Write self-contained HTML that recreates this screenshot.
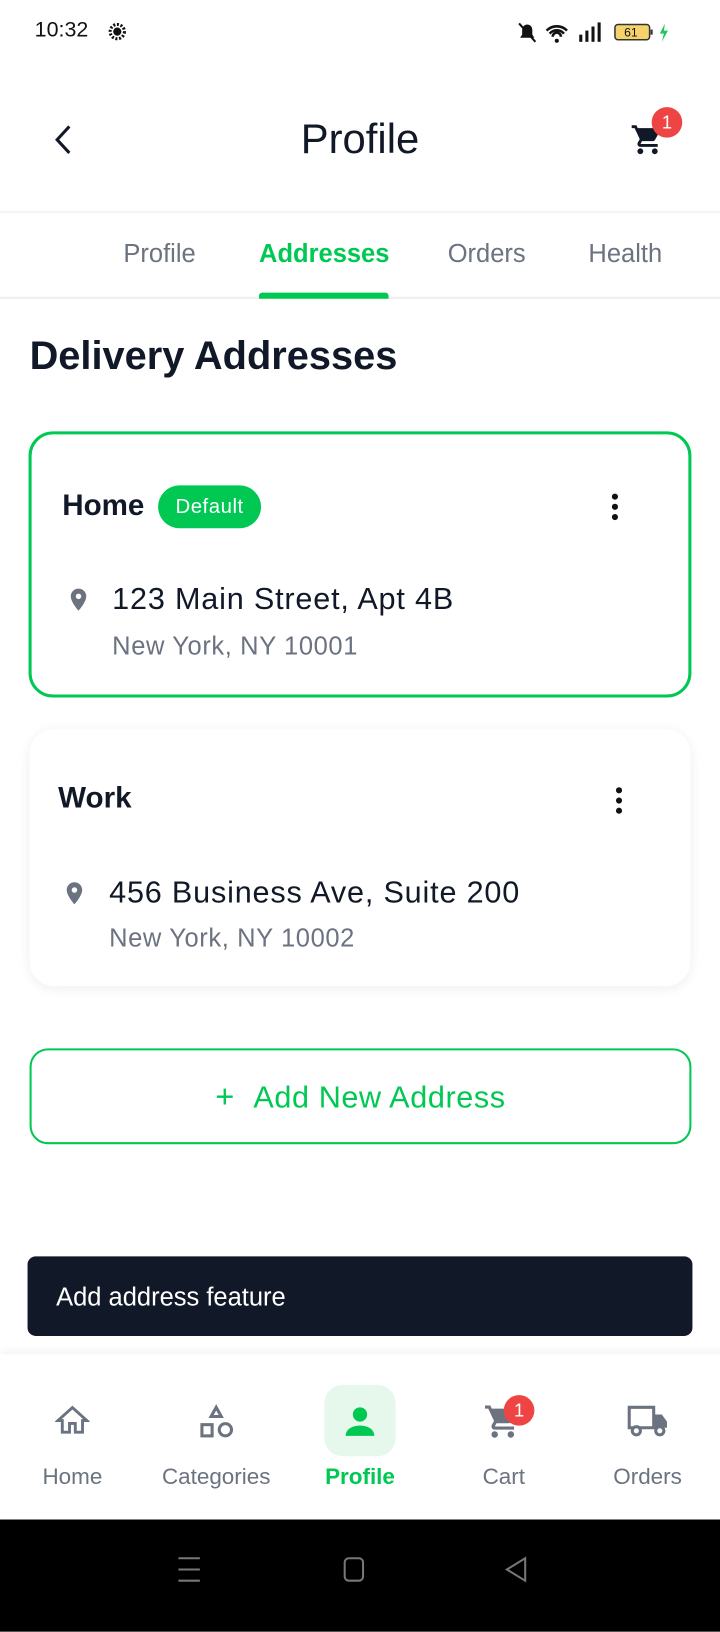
<!DOCTYPE html>
<html><head><meta charset="utf-8"><style>
*{margin:0;padding:0;box-sizing:border-box}
body{width:720px;height:1600px;position:relative;background:#fff;font-family:"Liberation Sans",sans-serif;overflow:hidden;color:#111827}
#w{position:absolute;left:0;top:0;width:706px;height:1569px;transform:scale(1.0198);transform-origin:0 0}
.a{position:absolute}
</style></head><body><div id="w">
<div class="a" style="left:34px;top:18px;font-size:21px;color:#111">10:32</div>
<svg class="a" style="left:104px;top:20px" width="22" height="22" viewBox="0 0 22 22"><circle cx="11" cy="11" r="7" fill="none" stroke="#111" stroke-width="3" stroke-dasharray="2 1.6"/><circle cx="11" cy="11" r="4" fill="#111"/></svg>
<svg class="a" style="left:506px;top:20px" width="160" height="24" viewBox="0 0 160 24">
<path d="M4 17h14l-2-3v-5a5 5 0 0 0-10 0v5z" fill="#111"/><line x1="3" y1="3" x2="19" y2="21" stroke="#111" stroke-width="2"/>
<path d="M30 10a14 14 0 0 1 20 0M33 13a9 9 0 0 1 14 0M36 16a4 4 0 0 1 8 0" stroke="#111" stroke-width="2.5" fill="none"/><circle cx="40" cy="20" r="2" fill="#111"/>
<rect x="62" y="14" width="3" height="7" fill="#111"/><rect x="68" y="10" width="3" height="11" fill="#111"/><rect x="74" y="6" width="3" height="15" fill="#111"/><rect x="80" y="2" width="3" height="19" fill="#111"/>
<rect x="97" y="4" width="34" height="15" rx="3" fill="#f5d36a" stroke="#333" stroke-width="1.5"/><text x="106" y="16" font-size="12" fill="#111" font-family="Liberation Sans">61</text><rect x="132" y="9" width="2" height="5" fill="#333"/>
<path d="M146 3l-5 10h4l-2 8 6-11h-4z" fill="#22c55e"/></svg>
<svg class="a" style="left:48px;top:120px" width="28" height="34" viewBox="0 0 28 34"><path d="M20 4L8 17l12 13" stroke="#111827" stroke-width="3" fill="none"/></svg>
<div class="a" style="left:0;width:706px;top:113px;text-align:center;font-size:41px">Profile</div>
<svg class="a" style="left:618px;top:120px" width="34" height="34" viewBox="0 0 24 24"><path fill="#111827" d="M7 18c-1.1 0-2 .9-2 2s.9 2 2 2 2-.9 2-2-.9-2-2-2zM1 2v2h2l3.6 7.6-1.4 2.4c-.1.3-.2.6-.2 1 0 1.1.9 2 2 2h12v-2H7.4c-.1 0-.2-.1-.2-.2v-.1l.9-1.7h7.4c.8 0 1.4-.4 1.7-1l3.6-6.5L19.1 4H5.2l-.9-2H1zm16 16c-1.1 0-2 .9-2 2s.9 2 2 2 2-.9 2-2-.9-2-2-2z"/></svg>
<div class="a" style="left:639px;top:105px;width:30px;height:30px;border-radius:15px;background:#ef4444;color:#fff;font-size:18px;text-align:center;line-height:30px">1</div>
<div class="a" style="left:0;top:207px;width:720px;height:2px;background:#f3f4f6"></div>
<div class="a" style="top:235px;left:121px;font-size:25px;color:#6b7280">Profile</div>
<div class="a" style="top:235px;left:254px;font-size:25px;color:#00c853;font-weight:bold">Addresses</div>
<div class="a" style="top:235px;left:439px;font-size:25px;color:#6b7280">Orders</div>
<div class="a" style="top:235px;left:577px;font-size:25px;color:#6b7280">Health</div>
<div class="a" style="left:0;top:291px;width:720px;height:2px;background:#eee"></div>
<div class="a" style="left:254px;top:287px;width:127px;height:6px;background:#00c853;border-radius:3px 3px 0 0"></div>
<div class="a" style="left:29px;top:328px;font-size:39px;font-weight:bold">Delivery Addresses</div>
<div class="a" style="left:28px;top:423px;width:650px;height:261px;border:3px solid #00c853;border-radius:24px"></div>
<div class="a" style="left:61px;top:480px;font-size:29px;font-weight:bold">Home</div>
<div class="a" style="left:155px;top:476px;width:101px;height:42px;border-radius:21px;background:#00c853;color:#fff;font-size:20px;text-align:center;line-height:42px;letter-spacing:0.5px">Default</div>
<svg class="a" style="left:597px;top:482px" width="12" height="32"><circle cx="6" cy="5" r="3" fill="#111"/><circle cx="6" cy="15" r="3" fill="#111"/><circle cx="6" cy="25" r="3" fill="#111"/></svg>
<svg class="a" style="left:64px;top:573px" width="26" height="30" viewBox="0 0 24 24"><path fill="#6b7280" d="M12 2C8.1 2 5 5.1 5 9c0 5.2 7 13 7 13s7-7.8 7-13c0-3.9-3.1-7-7-7zm0 9.5a2.5 2.5 0 1 1 0-5 2.5 2.5 0 0 1 0 5z"/></svg>
<div class="a" style="left:110px;top:571px;font-size:30px;letter-spacing:0.8px">123 Main Street, Apt 4B</div>
<div class="a" style="left:110px;top:620px;font-size:25px;color:#6b7280;letter-spacing:0.6px">New York, NY 10001</div>
<div class="a" style="left:29px;top:715px;width:648px;height:252px;border-radius:24px;background:#fff;box-shadow:0 2px 12px rgba(0,0,0,0.07)"></div>
<div class="a" style="left:57px;top:767px;font-size:29px;font-weight:bold">Work</div>
<svg class="a" style="left:601px;top:770px" width="12" height="32"><circle cx="6" cy="5" r="3" fill="#111"/><circle cx="6" cy="15" r="3" fill="#111"/><circle cx="6" cy="25" r="3" fill="#111"/></svg>
<svg class="a" style="left:60px;top:861px" width="26" height="30" viewBox="0 0 24 24"><path fill="#6b7280" d="M12 2C8.1 2 5 5.1 5 9c0 5.2 7 13 7 13s7-7.8 7-13c0-3.9-3.1-7-7-7zm0 9.5a2.5 2.5 0 1 1 0-5 2.5 2.5 0 0 1 0 5z"/></svg>
<div class="a" style="left:107px;top:859px;font-size:30px;letter-spacing:0.8px">456 Business Ave, Suite 200</div>
<div class="a" style="left:107px;top:906px;font-size:25px;color:#6b7280;letter-spacing:0.6px">New York, NY 10002</div>
<div class="a" style="left:29px;top:1028px;width:649px;height:94px;border:2px solid #00c853;border-radius:18px;color:#00c853;font-size:30px;text-align:center;line-height:90px;letter-spacing:0.6px"><span style="font-size:32px;margin-right:18px">+</span>Add New Address</div>
<div class="a" style="left:27px;top:1232px;width:652px;height:78px;border-radius:8px;background:#111827;color:#fff;font-size:25px;padding-left:28px;line-height:80px">Add address feature</div>
<div class="a" style="left:0;top:1328px;width:720px;height:162px;background:#fff;box-shadow:0 -3px 8px rgba(0,0,0,0.05)"></div>
<svg class="a" style="left:54px;top:1376px" width="34" height="34" viewBox="0 0 24 24"><path d="M12 3L2 12h3v8h5v-6h4v6h5v-8h3z" fill="none" stroke="#6b7280" stroke-width="2"/></svg>
<svg class="a" style="left:194px;top:1376px" width="36" height="36" viewBox="0 0 36 36"><path d="M18 4l5 9h-10z" fill="none" stroke="#6b7280" stroke-width="3"/><rect x="4" y="21" width="10" height="11" fill="none" stroke="#6b7280" stroke-width="3"/><circle cx="27" cy="26" r="6" fill="none" stroke="#6b7280" stroke-width="3"/></svg>
<div class="a" style="left:318px;top:1358px;width:70px;height:70px;border-radius:18px;background:#e6f8ec"></div>
<svg class="a" style="left:335px;top:1376px" width="36" height="36" viewBox="0 0 36 36"><circle cx="18" cy="11" r="7" fill="#00c853"/><path d="M4 32c0-7 7-10 14-10s14 3 14 10z" fill="#00c853"/></svg>
<svg class="a" style="left:474px;top:1375px" width="38" height="38" viewBox="0 0 24 24"><path fill="#6b7280" d="M7 18c-1.1 0-2 .9-2 2s.9 2 2 2 2-.9 2-2-.9-2-2-2zM1 2v2h2l3.6 7.6-1.4 2.4c-.1.3-.2.6-.2 1 0 1.1.9 2 2 2h12v-2H7.4c-.1 0-.2-.1-.2-.2v-.1l.9-1.7h7.4c.8 0 1.4-.4 1.7-1l3.6-6.5L19.1 4H5.2l-.9-2H1zm16 16c-1.1 0-2 .9-2 2s.9 2 2 2 2-.9 2-2-.9-2-2-2z"/></svg>
<div class="a" style="left:494px;top:1368px;width:30px;height:30px;border-radius:15px;background:#ef4444;color:#fff;font-size:18px;text-align:center;line-height:30px">1</div>
<svg class="a" style="left:614px;top:1376px" width="42" height="34" viewBox="0 0 42 34"><path d="M3 4h24v20H3z" fill="none" stroke="#6b7280" stroke-width="3"/><path d="M27 11h8l5 7v6H27z" fill="#6b7280"/><circle cx="10" cy="27" r="4" fill="#fff" stroke="#6b7280" stroke-width="3"/><circle cx="33" cy="27" r="4" fill="#fff" stroke="#6b7280" stroke-width="3"/></svg>
<div class="a" style="left:0;width:142px;top:1435px;text-align:center;font-size:22px;color:#6b7280">Home</div>
<div class="a" style="left:142px;width:140px;top:1435px;text-align:center;font-size:22px;color:#6b7280">Categories</div>
<div class="a" style="left:283px;width:140px;top:1435px;text-align:center;font-size:22px;color:#00c853;font-weight:bold">Profile</div>
<div class="a" style="left:424px;width:140px;top:1435px;text-align:center;font-size:22px;color:#6b7280">Cart</div>
<div class="a" style="left:565px;width:140px;top:1435px;text-align:center;font-size:22px;color:#6b7280">Orders</div>
<div class="a" style="left:0;top:1490px;width:720px;height:110px;background:#000"></div>
<svg class="a" style="left:170px;top:1525px" width="360" height="30"><path d="M5 3h21M5 14h21M5 25h21" stroke="#777" stroke-width="2"/><rect x="168" y="3" width="18" height="22" rx="4" fill="none" stroke="#777" stroke-width="2"/><path d="M345 3l-18 11 18 11z" fill="none" stroke="#777" stroke-width="2"/></svg>
</div></body></html>
